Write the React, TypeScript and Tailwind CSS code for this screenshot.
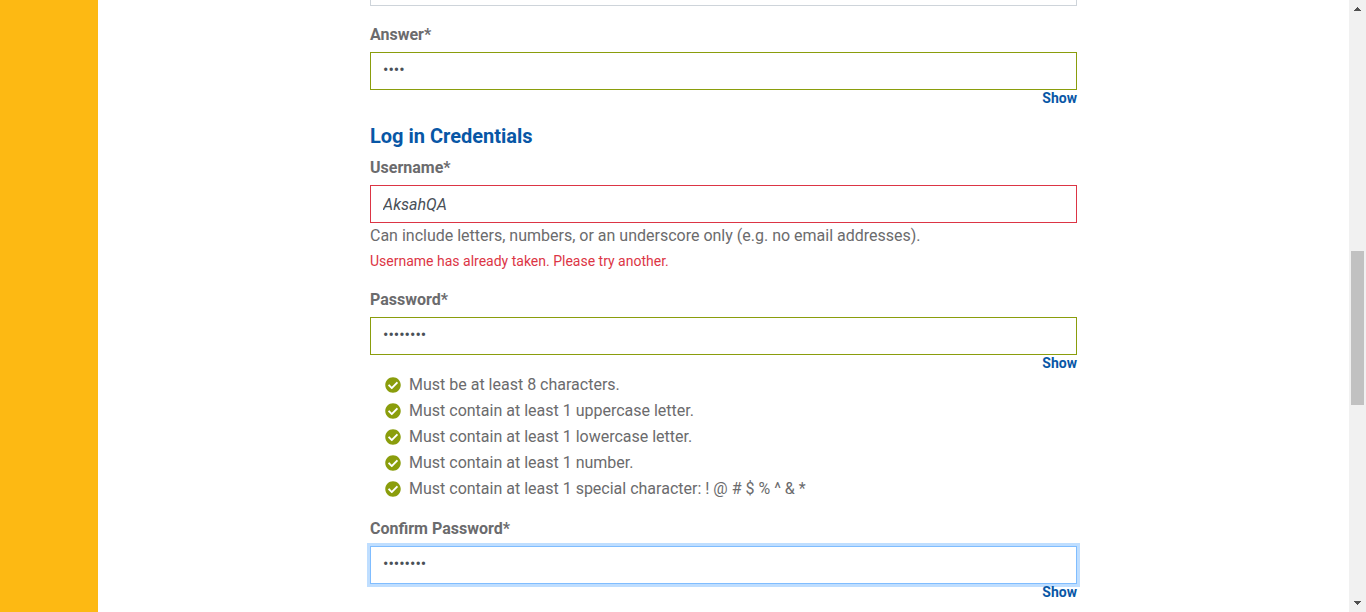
import { useState } from "react";

type SecretFieldProps = {
  id: string;
  label: string;
  initial: string;
  tone: string;
};

const inputBase =
  "block h-[38px] w-full border bg-white px-3 text-base text-[#495057] outline-none";

const labelBase = "mb-[5px] block text-base leading-6 font-bold text-[#6b6b6d]";

function SecretField({ id, label, initial, tone }: SecretFieldProps) {
  const [value, setValue] = useState(initial);
  const [visible, setVisible] = useState(false);
  return (
    <div>
      <label htmlFor={id} className={labelBase}>
        {label}
      </label>
      <input
        id={id}
        type={visible ? "text" : "password"}
        value={value}
        onChange={(e) => setValue(e.target.value)}
        className={`${inputBase} pb-1 ${tone}`}
      />
      <div className="flex justify-end">
        <button
          type="button"
          onClick={() => setVisible(!visible)}
          className="text-sm leading-4 font-bold text-[#0857a6]"
        >
          {visible ? "Hide" : "Show"}
        </button>
      </div>
    </div>
  );
}

function CheckIcon() {
  return (
    <svg viewBox="0 0 512 512" className="size-4 shrink-0 fill-[#8a9d0c]" aria-hidden="true">
      <path d="M504 256c0 136.967-111.033 248-248 248S8 392.967 8 256 119.033 8 256 8s248 111.033 248 248zM227.314 387.314l184-184c6.248-6.248 6.248-16.379 0-22.627l-22.627-22.627c-6.248-6.249-16.379-6.249-22.628 0L216 308.118l-70.059-70.059c-6.248-6.248-16.379-6.248-22.628 0l-22.627 22.627c-6.248 6.248-6.248 16.379 0 22.627l104 104c6.249 6.249 16.379 6.249 22.628.001z" />
    </svg>
  );
}

const rules = [
  "Must be at least 8 characters.",
  "Must contain at least 1 uppercase letter.",
  "Must contain at least 1 lowercase letter.",
  "Must contain at least 1 number.",
  "Must contain at least 1 special character: ! @ # $ % ^ & *",
];

function ScrollTrack() {
  return (
    <div className="flex w-[17px] shrink-0 flex-col items-center bg-[#f1f1f1]" aria-hidden="true">
      <svg viewBox="0 0 17 17" className="size-[17px] shrink-0 fill-[#505050]" shapeRendering="crispEdges">
        <path d="M8 7h1v1h1v1h1v1h1v1H5v-1h1V9h1V8h1z" />
      </svg>
      <div className="grow-[234]" />
      <div className="w-[13px] grow-[154] bg-[#c1c1c1]" />
      <div className="grow-[190]" />
      <svg viewBox="0 0 17 17" className="size-[17px] shrink-0 fill-[#505050]" shapeRendering="crispEdges">
        <path d="M5 6h7v1h-1v1h-1v1H9v1H8V9H7V8H6V7H5z" />
      </svg>
    </div>
  );
}

export default function App() {
  const [username, setUsername] = useState("AksahQA");
  return (
    <div className="flex h-screen overflow-hidden bg-white font-[Roboto,sans-serif] text-[#6b6b6d]">
      <div className="w-[98px] shrink-0 bg-[#fdb913]" />
      <main className="min-w-0 grow overflow-hidden">
        <form className="mx-auto -mt-8 max-w-[707px]" onSubmit={(e) => e.preventDefault()}>
          <select
            aria-label="Security question"
            className="mb-[17px] block h-[38px] w-full appearance-none border border-[#ced4da] bg-white px-3"
          />
          <SecretField id="answer" label="Answer*" initial="blue" tone="border-[#8a9d0c]" />

          <h2 className="mt-4 mb-1.5 text-xl leading-7 font-bold text-[#0857a6]">Log in Credentials</h2>

          <label htmlFor="username" className={labelBase}>
            Username*
          </label>
          <input
            id="username"
            type="text"
            value={username}
            onChange={(e) => setUsername(e.target.value)}
            aria-invalid="true"
            aria-describedby="username-help username-error"
            className={`${inputBase} border-[#dc3545] italic`}
          />
          <p id="username-help" className="text-base leading-[26px]">
            Can include letters, numbers, or an underscore only (e.g. no email addresses).
          </p>
          <p id="username-error" className="mb-[15px] text-sm leading-6 text-[#dc3545]">
            Username has already taken. Please try another.
          </p>

          <SecretField id="password" label="Password*" initial="Passw0rd" tone="border-[#8a9d0c]" />
          <ul className="mt-px mb-[15px] pl-[15px]">
            {rules.map((rule) => (
              <li key={rule} className="flex items-center gap-2 text-base leading-[26px]">
                <CheckIcon />
                {rule}
              </li>
            ))}
          </ul>

          <SecretField
            id="confirm-password"
            label="Confirm Password*"
            initial="Passw0rd"
            tone="border-[#80bdff] ring-3 ring-[#bfdeff]"
          />
        </form>
      </main>
      <ScrollTrack />
    </div>
  );
}
